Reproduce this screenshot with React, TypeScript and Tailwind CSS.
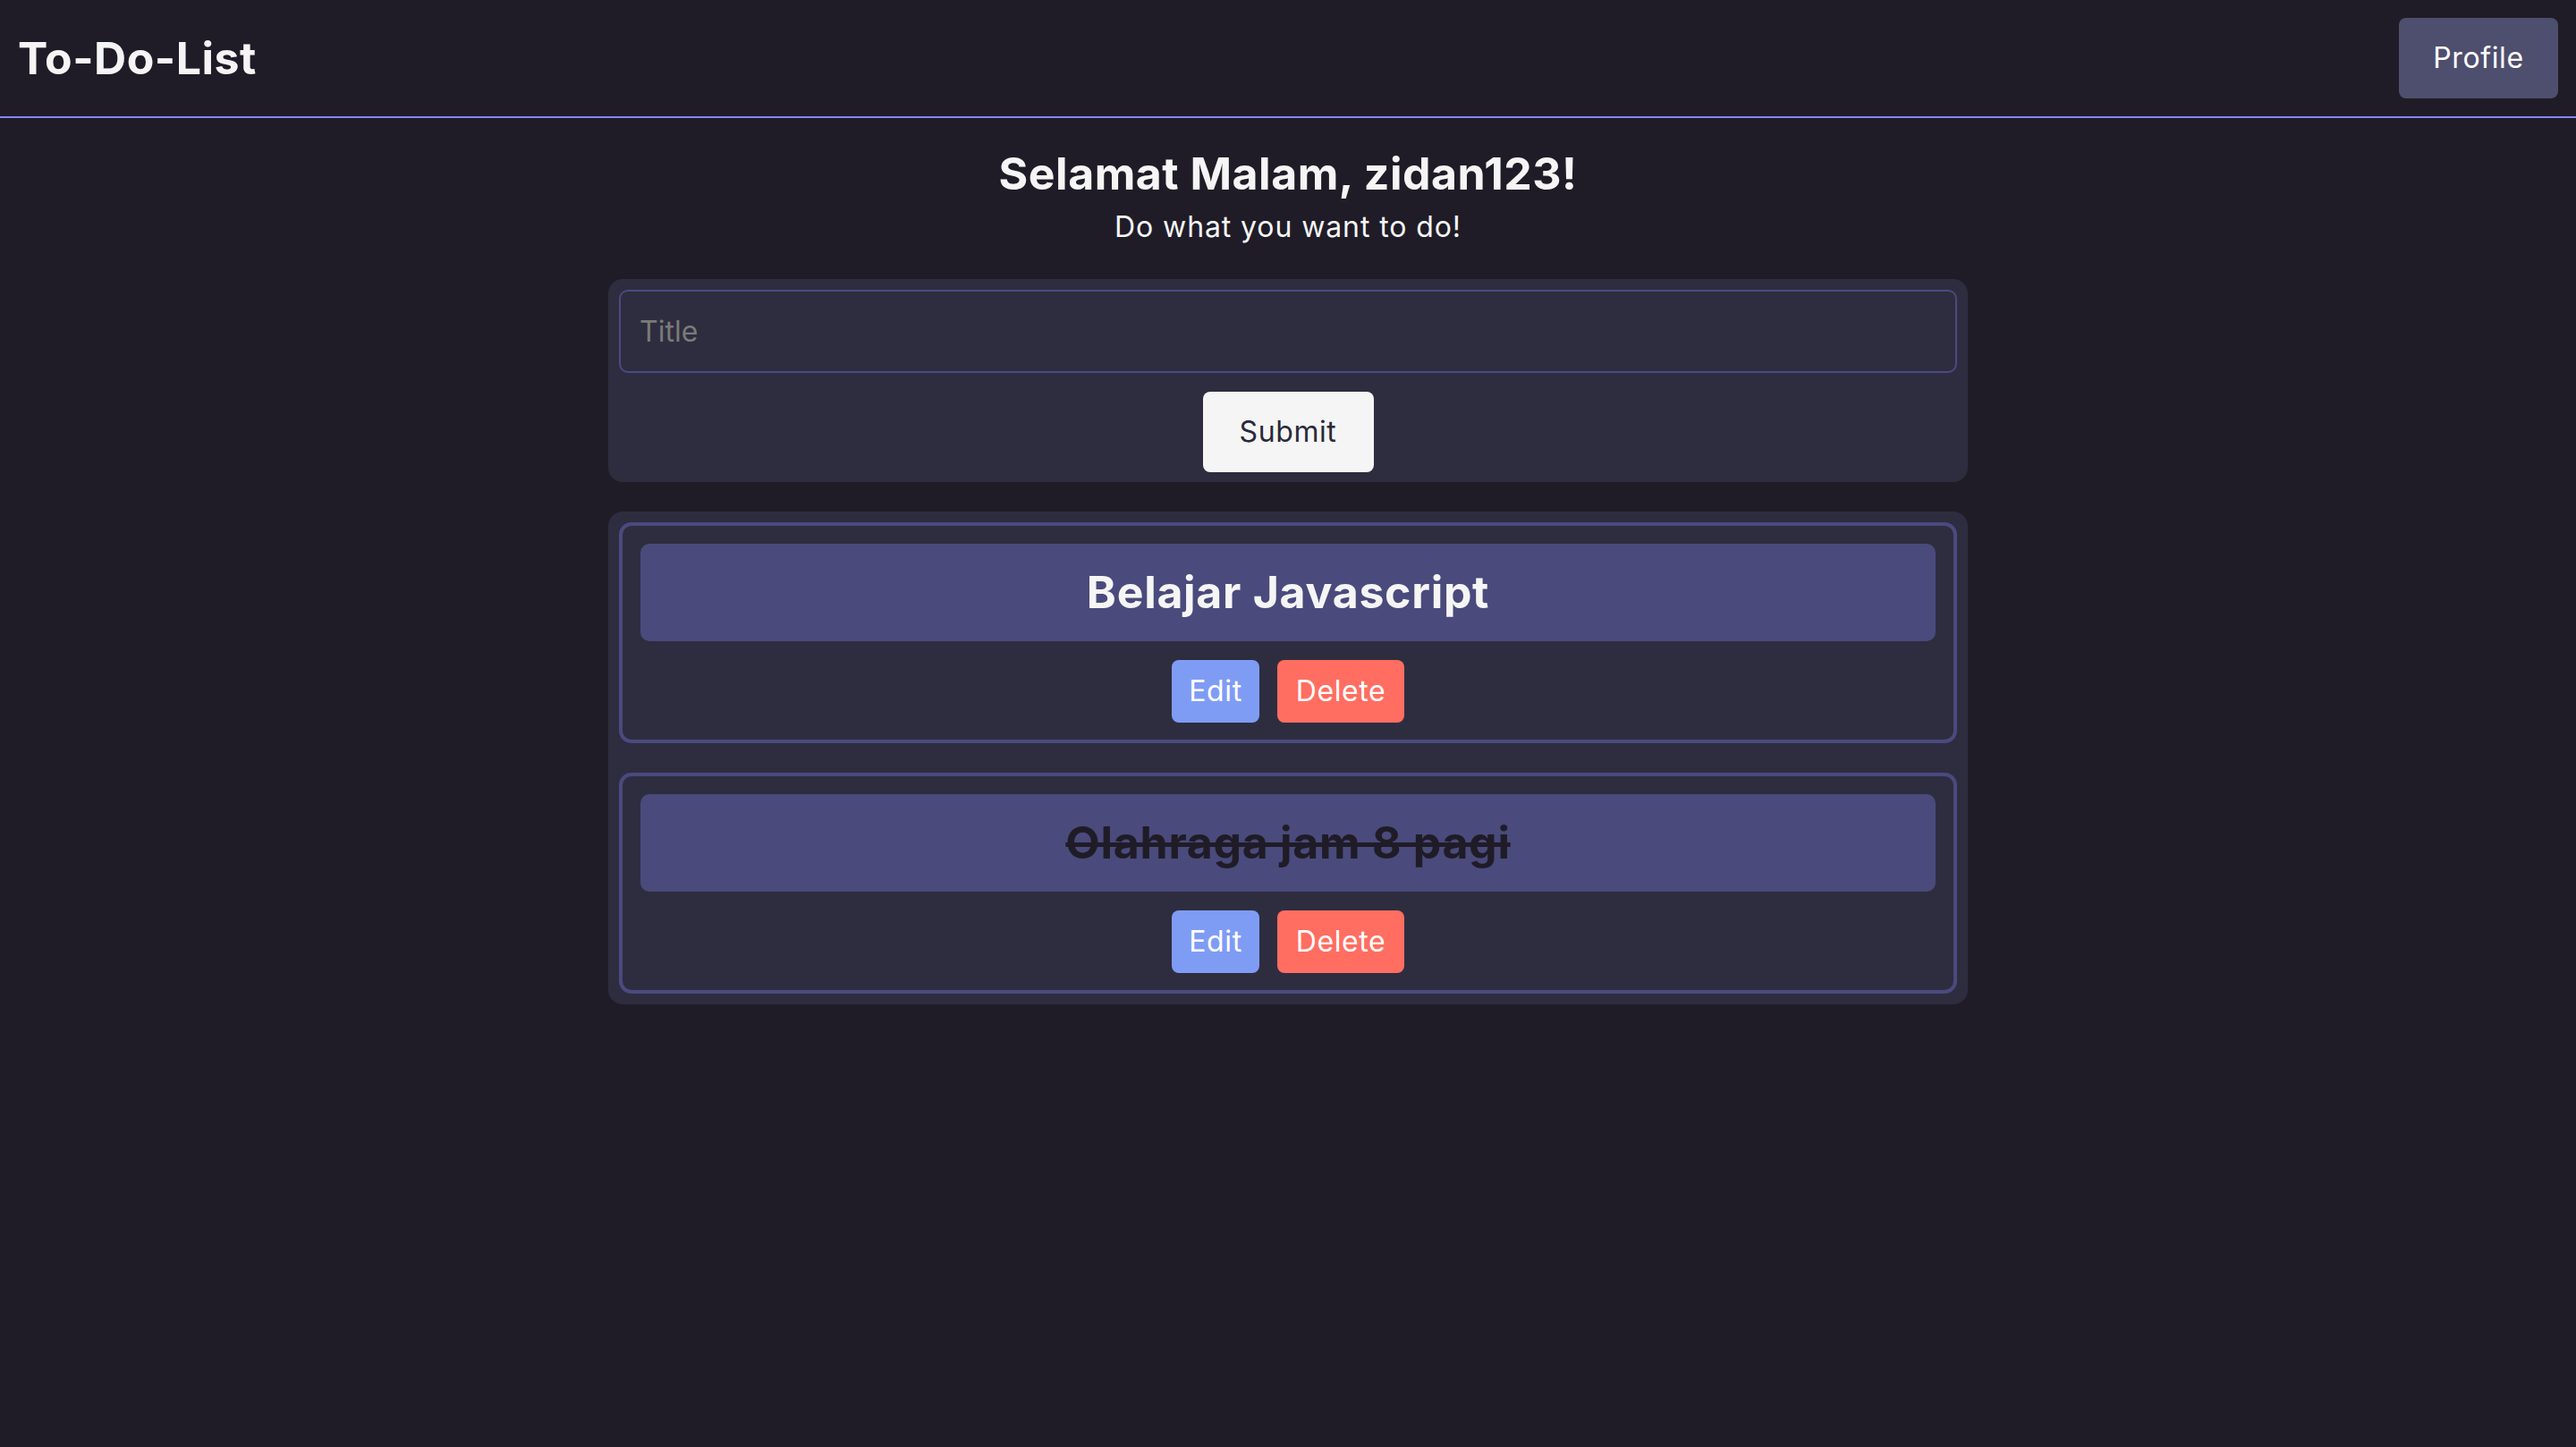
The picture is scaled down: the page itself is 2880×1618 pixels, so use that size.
import React, { useState } from 'react';

type Todo = { id: number; title: string; done: boolean };

const INITIAL: Todo[] = [
  { id: 1, title: 'Belajar Javascript', done: false },
  { id: 2, title: 'Olahraga jam 8 pagi', done: true },
];

const App: React.FC = () => {
  const [todos, setTodos] = useState<Todo[]>(INITIAL);
  const [title, setTitle] = useState('');

  const handleSubmit = (e: React.FormEvent) => {
    e.preventDefault();
    if (!title.trim()) return;
    setTodos([...todos, { id: Date.now(), title, done: false }]);
    setTitle('');
  };

  return (
    <div className="min-h-screen bg-[#1f1c27] text-[#f5f5f5] font-['Inter',sans-serif]">
      <header className="h-[132px] flex items-center justify-between px-[20px] border-b-2 border-[#8585ee]">
        <h1 className="text-[50px] font-bold leading-none tracking-[0.5px]">To-Do-List</h1>
        <button type="button" className="w-[178px] h-[90px] rounded-[8px] bg-[#4e4e6e] text-[32px] text-white tracking-[0.6px]">
          Profile
        </button>
      </header>

      <main className="flex flex-col items-center pt-[34px] pb-20">
        <h2 className="text-[50px] font-bold leading-[56px] tracking-[0.5px]">Selamat Malam, zidan123!</h2>
        <p className="text-[32px] leading-[48px] mt-[8px] tracking-[0.9px]">Do what you want to do!</p>

        <form
          onSubmit={handleSubmit}
          className="mt-[34px] w-[1520px] bg-[#2e2d3f] rounded-[16px] p-[12px] pb-[11px] flex flex-col items-center"
        >
          <input
            value={title}
            onChange={(e) => setTitle(e.target.value)}
            placeholder="Title"
            className="w-full h-[93px] border-2 border-[#4a4a80] rounded-[10px] bg-transparent px-[21px] text-[32px] text-white placeholder:text-[#7a7a7a] outline-none"
          />
          <button type="submit" className="mt-[21px] h-[90px] w-[191px] rounded-[8px] bg-[#f5f5f5] text-[32px] text-[#2a2a3a] tracking-[0.6px]">
            Submit
          </button>
        </form>

        <div className="mt-[33px] w-[1520px] bg-[#2e2d3f] rounded-[16px] p-[12px] flex flex-col gap-[33px]">
          {todos.map((todo) => (
            <div key={todo.id} className="border-4 border-[#4a4a80] rounded-[14px] px-[20px] pt-[20px] pb-[19px]">
              <div
                onClick={() => setTodos(todos.map((t) => (t.id === todo.id ? { ...t, done: !t.done } : t)))}
                className={`h-[109px] rounded-[10px] bg-[#4a4a7c] flex items-center justify-center text-[50px] font-bold tracking-[0.7px] ${
                  todo.done ? 'line-through text-[#1f1c27]' : 'text-[#f5f5f5]'
                }`}
              >
                {todo.title}
              </div>
              <div className="mt-[21px] flex justify-center gap-[20px]">
                <button type="button" className="w-[98px] h-[70px] rounded-[8px] bg-[#7f9cf5] text-[32px] text-white tracking-[0.6px]">
                  Edit
                </button>
                <button
                  type="button"
                  onClick={() => setTodos(todos.filter((t) => t.id !== todo.id))}
                  className="w-[142px] h-[70px] rounded-[8px] bg-[#ff6e61] text-[32px] text-white tracking-[0.6px]"
                >
                  Delete
                </button>
              </div>
            </div>
          ))}
        </div>
      </main>
    </div>
  );
};

export default App;
